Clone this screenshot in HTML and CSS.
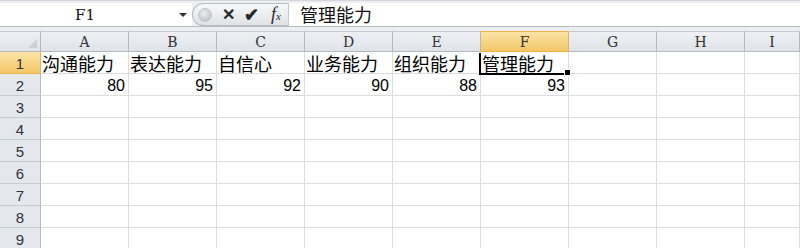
FILE: index.html
```html
<!DOCTYPE html>
<html lang="zh-CN">
<head>
    <meta charset="UTF-8">
    <title>Sheet1</title>
    <link rel="stylesheet" href="styles.css">
</head>
<body>
    <div class="toolbar">
        <div class="fbar">
            <div class="namebox">
                <span class="name">F1</span>
                <span class="arrow"></span>
            </div>
            <div class="pill">
                <span class="dot"></span>
                <span class="btn cancel">&#x2715;</span>
                <span class="btn enter">&#x2714;</span>
                <span class="btn fx"><i>f</i><small>x</small></span>
            </div>
            <div class="formula">管理能力</div>
        </div>
    </div>

    <div class="sheet">
        <div class="corner"><span class="tri"></span></div>
        <div class="colhead">A</div>
        <div class="colhead">B</div>
        <div class="colhead">C</div>
        <div class="colhead">D</div>
        <div class="colhead">E</div>
        <div class="colhead active">F</div>
        <div class="colhead">G</div>
        <div class="colhead">H</div>
        <div class="colhead">I</div>

        <div class="rowhead active">1</div>
        <div class="cell text">沟通能力</div>
        <div class="cell text">表达能力</div>
        <div class="cell text">自信心</div>
        <div class="cell text">业务能力</div>
        <div class="cell text">组织能力</div>
        <div class="cell text selected">管理能力</div>
        <div class="cell"></div>
        <div class="cell"></div>
        <div class="cell"></div>

        <div class="rowhead">2</div>
        <div class="cell num">80</div>
        <div class="cell num">95</div>
        <div class="cell num">92</div>
        <div class="cell num">90</div>
        <div class="cell num">88</div>
        <div class="cell num">93</div>
        <div class="cell"></div>
        <div class="cell"></div>
        <div class="cell"></div>
    </div>

    <script>
        // empty rows 3..9
        var sheet = document.querySelector('.sheet');
        for (var r = 3; r <= 9; r++) {
            var h = document.createElement('div');
            h.className = 'rowhead';
            h.textContent = r;
            sheet.appendChild(h);
            for (var c = 0; c < 9; c++) {
                var d = document.createElement('div');
                d.className = 'cell';
                sheet.appendChild(d);
            }
        }
    </script>
</body>
</html>
```

FILE: styles.css
```css
body {
    margin: 0;
    width: 800px;
    height: 248px;
    overflow: hidden;
    background: #fff;
    font-family: "Liberation Sans", Arial, sans-serif;
}
.toolbar {
    height: 31px;
    box-sizing: border-box;
    padding-top: 3px;
    background: #eceef1;
    border-top: 1px solid #d3d6da;
}
.fbar {
    display: flex;
    height: 23px;
    margin-top: -1px;
    border-bottom: 1px solid #b9bdc3;
}
.namebox {
    width: 192px;
    background: #fff;
    display: flex;
    align-items: center;
}
.name {
    width: 170px;
    text-align: center;
    font-family: "DejaVu Serif", serif;
    font-size: 15px;
    color: #111;
}
.arrow {
    width: 0;
    height: 0;
    margin-left: 9px;
    border-left: 4px solid transparent;
    border-right: 4px solid transparent;
    border-top: 4px solid #333;
}
.pill {
    width: 96px;
    box-sizing: border-box;
    display: flex;
    align-items: center;
    background: linear-gradient(#f7f8f9, #dfe2e6);
    border: 1px solid #b8bdc3;
    border-right: none;
    border-radius: 12px 0 0 12px;
    padding-left: 5px;
}
.dot {
    width: 12px;
    height: 12px;
    border-radius: 50%;
    background: radial-gradient(circle at 40% 35%, #eeeeee, #b4b7bb);
    border: 1px solid #c4c7cb;
}
.btn {
    color: #2a2a2a;
    line-height: 20px;
    font-weight: bold;
}
.cancel {
    margin-left: 10px;
    font-size: 16px;
}
.enter {
    margin-left: 9px;
    font-size: 18px;
}
.fx {
    margin-left: 12px;
    font-family: "Liberation Serif", serif;
    font-size: 18px;
    font-weight: normal;
}
.fx small {
    font-size: 11px;
    font-style: italic;
}
.formula {
    flex: 1;
    background: #fff;
    border-left: 1px solid #c4c8cd;
    padding-left: 11px;
    font-family: "Noto Sans CJK SC", sans-serif;
    font-size: 18px;
    line-height: 23px;
    color: #111;
}
.sheet {
    display: grid;
    grid-template-columns: 41px repeat(8, 88px) 1fr;
    grid-template-rows: 21px repeat(9, 22px);
}
.corner,
.colhead,
.rowhead {
    box-sizing: border-box;
    background: linear-gradient(#eef0f3, #dfe3e8);
    border-right: 1px solid #b3bac3;
    border-bottom: 1px solid #b3bac3;
    color: #333;
}
.corner {
    position: relative;
    border-top: 1px solid #c6cbd1;
}
.tri {
    position: absolute;
    right: 3px;
    bottom: 3px;
    width: 0;
    height: 0;
    border-left: 9px solid transparent;
    border-bottom: 9px solid #cdd1d6;
}
.colhead {
    border-top: 1px solid #c6cbd1;
    text-align: center;
    font-family: "DejaVu Serif", serif;
    font-size: 14px;
    line-height: 20px;
}
.rowhead {
    background: #e4e8ed;
    text-align: center;
    font-size: 15px;
    line-height: 23px;
    border-bottom-color: #c6ccd3;
}
.colhead.active,
.rowhead.active {
    background: linear-gradient(#fbe3a6, #f3c768);
    border-color: #f0b346;
    color: #333;
}
.cell {
    box-sizing: border-box;
    border-right: 1px solid #dadcdd;
    border-bottom: 1px solid #dadcdd;
    font-size: 16px;
    color: #000;
    white-space: nowrap;
}
.text {
    font-family: "Noto Sans CJK SC", sans-serif;
    font-size: 18px;
    line-height: 22px;
    padding-left: 1px;
}
.num {
    text-align: right;
    padding-right: 3px;
    line-height: 23px;
}
.selected {
    position: relative;
}
.selected::after {
    content: "";
    position: absolute;
    left: -2px;
    top: 1px;
    right: 3px;
    bottom: -2px;
    border-left: 2px solid #000;
    border-bottom: 2px solid #000;
}
.selected::before {
    content: "";
    position: absolute;
    right: -3px;
    bottom: -3px;
    width: 5px;
    height: 5px;
    background: #000;
    border: 1px solid #fff;
    z-index: 1;
}
```
